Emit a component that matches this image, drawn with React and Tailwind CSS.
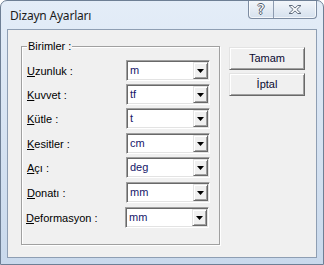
import React from 'react'

const rows = [
    { key: "U", rest: "zunluk :", value: "m", mt: "mt-0" },
    { key: "K", rest: "uvvet :", value: "tf", mt: "mt-[3px]" },
    { key: "K", rest: "ütle :", value: "t", mt: "mt-[3px]" },
    { key: "K", rest: "esitler :", value: "cm", mt: "mt-[4px]" },
    { key: "A", rest: "çı :", value: "deg", mt: "mt-[3px]" },
    { key: "D", rest: "onatı :", value: "mm", mt: "mt-[4px]" },
    { key: "D", rest: "eformasyon :", value: "mm", mt: "mt-[4px]", shift: true },
]

function Combo({ value }) {
    return (
        <div className="w-[84px] h-[21px] flex bg-white border border-t-[#a0a0a0] border-l-[#a0a0a0] border-b-white border-r-white shadow-[inset_1px_1px_0_#696969,inset_-1px_-1px_0_#e3e3e3] p-[1px]">
            <span className="flex-1 pl-[2px] text-[11px] leading-[17px] text-[#16166a]">{value}</span>
            <div className="w-[15px] h-[17px] bg-[#f0f0f0] border border-t-[#e3e3e3] border-l-[#e3e3e3] border-b-[#696969] border-r-[#696969] shadow-[inset_1px_1px_0_#fff,inset_-1px_-1px_0_#a0a0a0] flex items-center justify-center">
                <svg width="7" height="4" viewBox="0 0 7 4"><path d="M0 0h7L3.5 4z" fill="#000" /></svg>
            </div>
        </div>
    )
}

function Button({ children }) {
    return (
        <button className="w-[76px] h-[23px] bg-[#f0f0f0] border border-t-[#e3e3e3] border-l-[#e3e3e3] border-b-[#696969] border-r-[#696969] shadow-[inset_1px_1px_0_#fff,inset_-1px_-1px_0_#a0a0a0] text-[11px] text-[#0a0a30]">
            {children}
        </button>
    )
}

export default function App() {
    return (
        <div className="w-[324px] h-[265px] flex flex-col rounded-t-[7px] border border-[#6e7f95] bg-gradient-to-b from-[#e4edf8] to-[#c9d9ec] font-['Liberation_Sans',sans-serif] overflow-hidden">
            <div className="h-[28px] flex items-start shrink-0">
                <span className="pl-[9px] pt-[7px] text-[12px] text-[#1b1b1b] font-['Noto_Sans',sans-serif] leading-[16px] tracking-[-0.2px]">Dizayn Ayarları</span>
                <div className="ml-auto mr-[6px] -mt-px flex h-[19px] border border-t-0 border-[#7d8ca2] rounded-b-[4px] overflow-hidden bg-gradient-to-b from-[#f4f7fb] to-[#d6e1ee] shadow-[inset_0_0_0_1px_rgba(255,255,255,0.7)]">
                    <div className="w-[25px] flex items-center justify-center border-r border-[#8d9bb0]">
                        <span className="text-[14px] leading-none text-white font-['DejaVu_Sans',sans-serif] [text-shadow:1px_0_0_#4d5869,-1px_0_0_#4d5869,0_1px_0_#4d5869,0_-1px_0_#4d5869]">?</span>
                    </div>
                    <div className="w-[42px] flex items-center justify-center">
                        <svg width="16" height="11" viewBox="0 0 16 11">
                            <path d="M2 1.5h3.2l2.8 2.6 2.8-2.6h3.2l-4.2 4 4.2 4h-3.2l-2.8-2.6-2.8 2.6h-3.2l4.2-4z" fill="#fff" stroke="#5f6b7c" strokeWidth="1" strokeLinejoin="round" />
                        </svg>
                    </div>
                </div>
            </div>
            <div className="flex-1 mx-[6px] mb-[6px] border border-[#8e9eb3] bg-[#f0f0f0] flex items-start">
                <div className="relative ml-[13px] mt-[16px] w-[199px] h-[199px] border border-[#a0a0a0] shadow-[inset_1px_1px_0_#fff,1px_1px_0_#fff] pt-[13px] pl-[5px] flex flex-col">
                    <span className="absolute left-[5px] top-[-7px] px-[1px] bg-[#f0f0f0] text-[11px] leading-[13px] text-black">Birimler :</span>
                    {rows.map((r, i) => (
                        <div key={i} className={`flex items-center ${r.mt} ${r.shift ? "-ml-[1px]" : ""}`}>
                            <span className="w-[99px] text-[11px] leading-[13px] pt-[1px] text-black">
                                <span className="underline underline-offset-[1px]">{r.key}</span>{r.rest}
                            </span>
                            <Combo value={r.value} />
                        </div>
                    ))}
                </div>
                <div className="ml-[9px] mt-[17px] flex flex-col gap-[3px]">
                    <Button>Tamam</Button>
                    <Button>İptal</Button>
                </div>
            </div>
        </div>
    )
}
